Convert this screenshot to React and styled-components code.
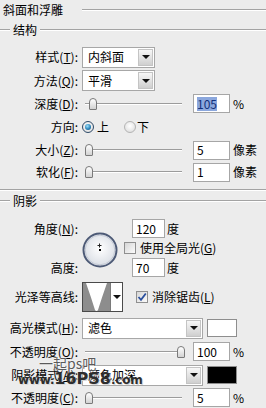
import React from "react";
import styled, { createGlobalStyle } from "styled-components";

const GlobalStyle = createGlobalStyle`
  body { margin: 0; background: #ececec; }
  * { box-sizing: border-box; }
`;

const Panel = styled.div`
  position: relative;
  width: 266px;
  height: 408px;
  overflow: hidden;
  background: #ececec;
  color: #000;
  font-family: "Noto Sans CJK SC", "Noto Sans", sans-serif;
  font-size: 12px;
  line-height: 1;
`;

const TitleRow = styled.div`
  display: flex;
  align-items: center;
  height: 20px;
  padding-left: 3px;
`;

const Etched = styled.div`
  flex: 1;
  height: 2px;
  border-top: 1px solid #a3a3a3;
  border-bottom: 1px solid #fff;
  margin-left: ${(p) => p.$gap || 0}px;
`;

const GroupHead = styled.div`
  display: flex;
  align-items: center;
  height: 20px;
`;

const Lead = styled(Etched)`
  flex: 0 0 10px;
`;

const GroupTitle = styled.span`
  padding: 0 3px;
`;

const Divider = styled.div`
  margin-top: 6px;
  height: 2px;
  border-top: 1px solid #a3a3a3;
  border-bottom: 1px solid #fff;
`;

const Section = styled.div`
  margin-top: ${(p) => p.$top || 0}px;
`;

const Row = styled.div`
  display: flex;
  align-items: center;
  height: ${(p) => p.$h}px;
  margin-top: ${(p) => p.$mt || 0}px;
`;

const Label = styled.div`
  flex: 0 0 78px;
  text-align: right;
  margin-right: 4px;
  white-space: nowrap;
`;

const Select = styled.div`
  display: flex;
  width: ${(p) => p.$w}px;
  height: 21px;
  border: 1px solid #a7a7a7;
  background: #fff;
`;

const SelectText = styled.div`
  flex: 1;
  display: flex;
  align-items: center;
  padding-left: 5px;
`;

const DropBtn = styled.div`
  width: 15px;
  margin: 1px;
  border: 1px solid #c4c4c4;
  background: linear-gradient(#f7f7f7, #cfcfcf);
  display: flex;
  align-items: center;
  justify-content: center;
`;

const Arrow = styled.span`
  width: 0;
  height: 0;
  border-left: 4px solid transparent;
  border-right: 4px solid transparent;
  border-top: 4px solid #111;
`;

const Slider = styled.div`
  position: relative;
  flex: 0 0 97px;
  height: 14px;
  margin-left: 3px;
`;

const Track = styled.div`
  position: absolute;
  left: 0;
  right: 0;
  top: 6px;
  height: 2px;
  border-top: 1px solid #9c9c9c;
  border-bottom: 1px solid #fff;
`;

const Thumb = styled.div`
  position: absolute;
  top: 1px;
  left: ${(p) => p.$pos - 4}px;
  width: 8px;
  height: 12px;
  border: 1px solid #7a7a7a;
  border-radius: 4px 4px 1px 1px;
  background: linear-gradient(#fff, #d2d2d2);
`;

const NumBox = styled.div`
  flex: 0 0 ${(p) => p.$w || 37}px;
  height: 19px;
  margin-left: ${(p) => p.$ml || 0}px;
  border: 1px solid #a6a6a6;
  background: #fff;
  display: flex;
  align-items: center;
  padding-left: 3px;
`;

const Selected = styled.span`
  background: #8ba7dd;
  color: #12307a;
  padding: 1px 0;
`;

const Unit = styled.span`
  margin-left: ${(p) => p.$ml ?? 3}px;
`;

const RadioCircle = styled.span`
  flex: 0 0 12px;
  height: 12px;
  border-radius: 50%;
  border: 1px solid ${(p) => (p.$on ? "#2e4a68" : "#b4b4b4")};
  background: radial-gradient(circle at 50% 40%, #fff, #d8d8d8);
  display: flex;
  align-items: center;
  justify-content: center;
  margin-left: ${(p) => p.$ml || 0}px;
`;

const RadioDot = styled.span`
  width: 6px;
  height: 6px;
  border-radius: 50%;
  background: radial-gradient(circle at 40% 35%, #9fe0f8, #2b86bd 55%, #0d4a72);
`;

const Text = styled.span`
  margin-left: ${(p) => p.$ml || 0}px;
  white-space: nowrap;
`;

const AngleGrid = styled.div`
  display: grid;
  grid-template-columns: 78px 38px auto;
  grid-template-rows: 19px 20px 19px;
  column-gap: 4px;
  margin-top: 8px;
  align-items: center;
`;

const GridLabel = styled.div`
  grid-column: 1;
  grid-row: ${(p) => p.$row};
  text-align: right;
  white-space: nowrap;
`;

const DialCell = styled.div`
  grid-column: 2;
  grid-row: 1 / 4;
  margin-top: 3px;
  width: 36px;
  height: 36px;
`;

const GridCell = styled.div`
  grid-column: 3;
  grid-row: ${(p) => p.$row};
  display: flex;
  align-items: center;
  height: 100%;
`;

const CheckBox = styled.span`
  flex: 0 0 12px;
  height: 12px;
  margin-left: ${(p) => p.$ml || 0}px;
  border: 1px solid #8f8f8f;
  background: linear-gradient(135deg, #d6d6d6, #fbfbfb);
  display: flex;
  align-items: center;
  justify-content: center;
`;

const ContourPicker = styled.div`
  display: flex;
  width: 41px;
  height: 30px;
  border: 1px solid #4a4a4a;
  background: #fff;
`;

const ContourArrow = styled.div`
  flex: 1;
  border-left: 1px solid #7a7a7a;
  display: flex;
  align-items: center;
  justify-content: center;
`;

const Swatch = styled.div`
  width: 30px;
  height: 18px;
  margin-left: 4px;
  border: 1px solid #8e8e8e;
  background: ${(p) => p.$c};
`;

const Watermark = styled.div`
  position: absolute;
  left: 18px;
  top: 356px;
  pointer-events: none;
`;

const WmTitle = styled.div`
  margin-left: 21px;
  font-size: 14px;
  color: #5a5a5a;
  text-shadow: 0 0 2px #fff, 0 0 1px #fff;
`;

const WmSite = styled.div`
  margin-top: 1px;
  font-family: "DejaVu Sans", sans-serif;
  font-weight: bold;
  font-size: 12px;
  color: #2e2e2e;
  letter-spacing: -0.2px;
  text-shadow: 1px 1px 0 #d8d8d8;
`;

const WmBig = styled.span`
  font-size: 16px;
  letter-spacing: 0;
`;

const Key = ({ children }) => <u>{children}</u>;

const Dropdown = ({ w, children }) => (
  <Select $w={w}>
    <SelectText>{children}</SelectText>
    <DropBtn>
      <Arrow />
    </DropBtn>
  </Select>
);

const Range = ({ pos }) => (
  <Slider>
    <Track />
    <Thumb $pos={pos} />
  </Slider>
);

const Tick = () => (
  <svg width="10" height="10" viewBox="0 0 10 10">
    <path d="M1.5 5 L4 7.8 L8.8 1.5" fill="none" stroke="#2a4f9e" strokeWidth="1.8" />
  </svg>
);

const Dial = () => (
  <svg width="36" height="36" viewBox="0 0 36 36">
    <defs>
      <radialGradient id="dialFill" cx="50%" cy="45%" r="55%">
        <stop offset="0%" stopColor="#ffffff" />
        <stop offset="100%" stopColor="#d9dde4" />
      </radialGradient>
    </defs>
    <circle cx="18" cy="18" r="16.5" fill="url(#dialFill)" stroke="#4d5a76" strokeWidth="2" />
    <circle cx="18" cy="18" r="14.8" fill="none" stroke="#c3c9d4" strokeWidth="1" />
    <path d="M17.5 11.5 V15.5 M15.5 13.5 H19.5" stroke="#222" strokeWidth="1" />
    <rect x="17" y="17" width="2" height="2" fill="#000" />
  </svg>
);

const Contour = () => (
  <svg width="27" height="28" viewBox="0 0 27 28">
    <path d="M0 0 H3 Q8 14 12 27 Q12.5 28 13.5 28 H0 Z" fill="#8d8d8d" />
    <path d="M27 0 H24 Q19 14 15 27 Q14.5 28 13.5 28 H27 Z" fill="#8d8d8d" />
  </svg>
);

export default function App() {
  return (
    <Panel>
      <GlobalStyle />
      <TitleRow>
        <span>斜面和浮雕</span>
        <Etched $gap={19} />
      </TitleRow>

      <GroupHead>
        <Lead />
        <GroupTitle>结构</GroupTitle>
        <Etched />
      </GroupHead>

      <Section $top={5}>
        <Row $h={24}>
          <Label>样式(<Key>T</Key>):</Label>
          <Dropdown w={73}>内斜面</Dropdown>
        </Row>
        <Row $h={23}>
          <Label>方法(<Key>Q</Key>):</Label>
          <Dropdown w={73}>平滑</Dropdown>
        </Row>
        <Row $h={23}>
          <Label>深度(<Key>D</Key>):</Label>
          <Range pos={8} />
          <NumBox $ml={11}>
            <Selected>105</Selected>
          </NumBox>
          <Unit>%</Unit>
        </Row>
        <Row $h={24}>
          <Label>方向:</Label>
          <RadioCircle $on>
            <RadioDot />
          </RadioCircle>
          <Text $ml={3}>上</Text>
          <RadioCircle $ml={15} />
          <Text $ml={1}>下</Text>
        </Row>
        <Row $h={22}>
          <Label>大小(<Key>Z</Key>):</Label>
          <Range pos={4} />
          <NumBox $ml={11}>5</NumBox>
          <Unit>像素</Unit>
        </Row>
        <Row $h={22}>
          <Label>软化(<Key>F</Key>):</Label>
          <Range pos={4} />
          <NumBox $ml={11}>1</NumBox>
          <Unit>像素</Unit>
        </Row>
      </Section>

      <Divider />

      <GroupHead>
        <Lead />
        <GroupTitle>阴影</GroupTitle>
        <Etched />
      </GroupHead>

      <AngleGrid>
        <GridLabel $row={1}>角度(<Key>N</Key>):</GridLabel>
        <DialCell>
          <Dial />
        </DialCell>
        <GridCell $row={1}>
          <NumBox $w={33} $ml={8}>120</NumBox>
          <Unit $ml={2}>度</Unit>
        </GridCell>
        <GridCell $row={2}>
          <CheckBox />
          <Text $ml={4}>使用全局光(<Key>G</Key>)</Text>
        </GridCell>
        <GridLabel $row={3}>高度:</GridLabel>
        <GridCell $row={3}>
          <NumBox $w={33} $ml={8}>70</NumBox>
          <Unit $ml={2}>度</Unit>
        </GridCell>
      </AngleGrid>

      <Row $h={30} $mt={5}>
        <Label>光泽等高线:</Label>
        <ContourPicker>
          <Contour />
          <ContourArrow>
            <Arrow />
          </ContourArrow>
        </ContourPicker>
        <CheckBox $ml={13}>
          <Tick />
        </CheckBox>
        <Text $ml={4}>消除锯齿(<Key>L</Key>)</Text>
      </Row>

      <Row $h={24} $mt={4}>
        <Label>高光模式(<Key>H</Key>):</Label>
        <Dropdown w={121}>滤色</Dropdown>
        <Swatch $c="#fff" />
      </Row>
      <Row $h={23}>
        <Label>不透明度(<Key>O</Key>):</Label>
        <Range pos={96} />
        <NumBox $ml={11}>100</NumBox>
        <Unit>%</Unit>
      </Row>
      <Row $h={24}>
        <Label>阴影模式(<Key>A</Key>):</Label>
        <Dropdown w={121}>颜色加深</Dropdown>
        <Swatch $c="#000" />
      </Row>
      <Row $h={21}>
        <Label>不透明度(<Key>C</Key>):</Label>
        <Range pos={4} />
        <NumBox $ml={11}>5</NumBox>
        <Unit>%</Unit>
      </Row>

      <Watermark>
        <WmTitle>一起ps吧</WmTitle>
        <WmSite>
          www.<WmBig>16PS8</WmBig>.com
        </WmSite>
      </Watermark>
    </Panel>
  );
}
